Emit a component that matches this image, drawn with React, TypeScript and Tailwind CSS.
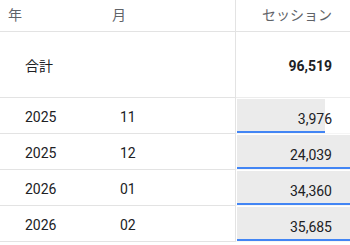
const rows = [
  { year: "2025", month: "11", sessions: "3,976", bar: "w-[88px]" },
  { year: "2025", month: "12", sessions: "24,039", bar: "w-full" },
  { year: "2026", month: "01", sessions: "34,360", bar: "w-full" },
  { year: "2026", month: "02", sessions: "35,685", bar: "w-full" },
];

const font = "font-['Roboto','Noto_Sans_CJK_JP',sans-serif]";

export default function App() {
  return (
    <div className={`w-[350px] h-[245px] overflow-hidden bg-white text-[14px] text-[#202124] ${font}`}>
      {/* Header */}
      <div className="flex h-[32px]">
        <div className="flex w-[235px] items-center border-b border-[#e3e3e3] text-[#5f6368]">
          <span className="w-[112px] pl-[8px]">年</span>
          <span>月</span>
        </div>
        <div className="w-px bg-[#e3e3e3]" />
        <div className="flex flex-1 items-center justify-end border-b border-[#e3e3e3] pr-[18px] text-[#5f6368]">
          セッション
        </div>
      </div>

      {/* Total */}
      <div className="flex h-[66px]">
        <div className="flex w-[235px] items-center border-b border-[#e3e3e3] pl-[25px] pt-[3px]">
          合計
        </div>
        <div className="w-px bg-[#e3e3e3]" />
        <div className="flex flex-1 items-center justify-end border-b border-[#ececec] pr-[18px] pt-[3px] font-bold">
          96,519
        </div>
      </div>

      {/* Data rows */}
      {rows.map((r) => (
        <div key={r.year + r.month} className="flex h-[36px]">
          <div className="flex w-[235px] items-center border-b border-[#e3e3e3] pt-[4px]">
            <span className="w-[112px] pl-[25px]">{r.year}</span>
            <span className="pl-[8px]">{r.month}</span>
          </div>
          <div className="w-px bg-[#e3e3e3]" />
          <div className="relative flex-1 border-b border-[#f5f5f5] pl-[1px] pt-[1px]">
            <div className={`h-[34px] ${r.bar} border-b-2 border-[#4285f4] bg-[#ebebeb]`} />
            <span className="absolute right-[18px] top-[13px] leading-[16px]">{r.sessions}</span>
          </div>
        </div>
      ))}
    </div>
  );
}
